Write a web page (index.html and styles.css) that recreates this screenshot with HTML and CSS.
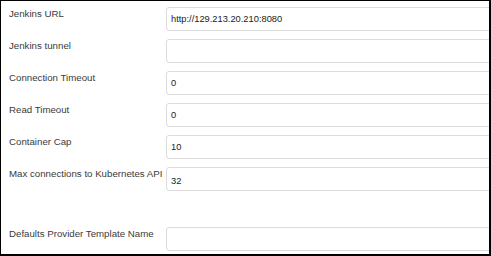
FILE: index.html
```html
<!DOCTYPE html>
<html lang="en">
<head>
    <meta charset="UTF-8">
    <title>Kubernetes Cloud</title>
    <link rel="stylesheet" href="styles.css">
</head>
<body>
    <div class="frame">
        <div class="config">
            <label class="field-label">Jenkins URL</label>
            <input class="field-input" type="text" value="http://129.213.20.210:8080">

            <label class="field-label">Jenkins tunnel</label>
            <input class="field-input" type="text" value="">

            <label class="field-label">Connection Timeout</label>
            <input class="field-input" type="text" value="0">

            <label class="field-label">Read Timeout</label>
            <input class="field-input" type="text" value="0">

            <label class="field-label">Container Cap</label>
            <input class="field-input" type="text" value="10">

            <label class="field-label">Max connections to Kubernetes API</label>
            <input class="field-input low" type="text" value="32">

            <div class="spacer"></div>

            <label class="field-label">Defaults Provider Template Name</label>
            <input class="field-input" type="text" value="">
        </div>
    </div>
</body>
</html>
```
FILE: styles.css
```css
body {
    margin: 0;
    background-color: #ffffff;
    font-family: "Liberation Sans", Arial, sans-serif;
    color: #3a3a3a;
}
.frame {
    width: 491px;
    height: 256px;
    box-sizing: border-box;
    border: 1px solid #000000;
    border-right-width: 2px;
    border-bottom-width: 2px;
    overflow: hidden;
}
.config {
    display: grid;
    grid-template-columns: 165px 340px;
    row-gap: 8px;
    padding-top: 6px;
}
.field-label {
    font-size: 9.7px;
    line-height: 12px;
    padding-left: 8px;
    padding-top: 1px;
    white-space: nowrap;
}
.field-input {
    height: 24px;
    box-sizing: border-box;
    border: 1px solid #dcdcdc;
    border-radius: 3px;
    padding: 0 4px;
    font-family: "Liberation Sans", Arial, sans-serif;
    font-size: 9.3px;
    color: #222222;
    background-color: #ffffff;
    outline: none;
}
.field-input.low {
    padding-top: 3px;
}
.spacer {
    grid-column: 1 / span 2;
    height: 20px;
}
```
